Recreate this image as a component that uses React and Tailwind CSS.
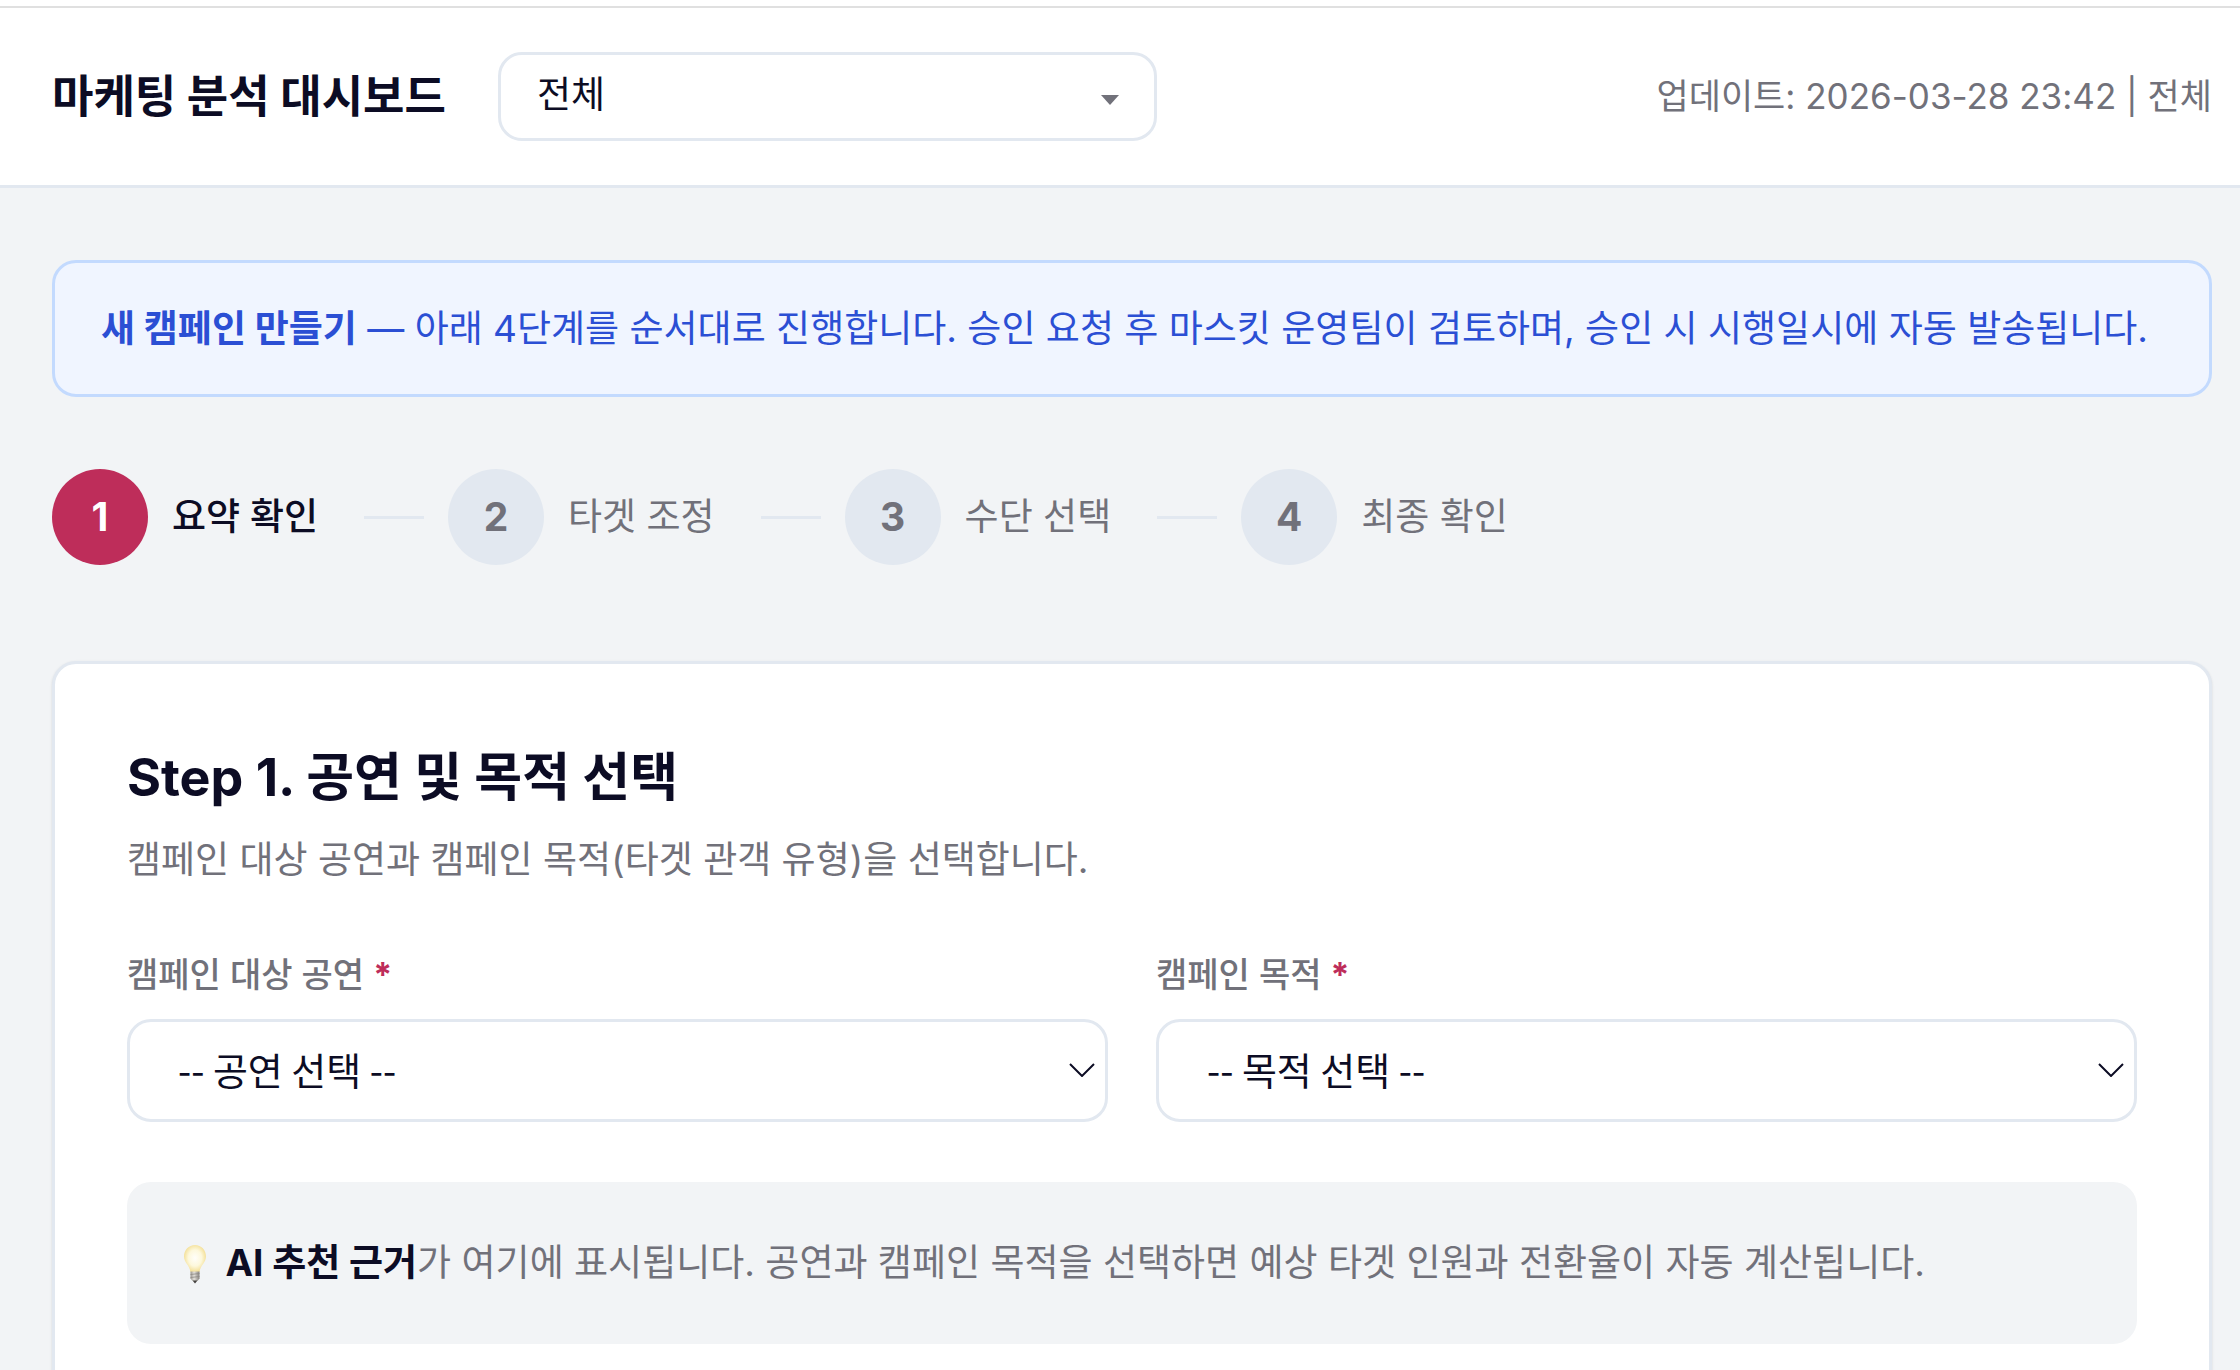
import { useState } from 'react';

const steps = ['요약 확인', '타겟 조정', '수단 선택', '최종 확인'];

function BulbIcon() {
  return (
    <svg viewBox="0 0 24 40" className="inline-block w-6 h-10 mx-2 align-[-8px]" aria-hidden="true">
      <defs>
        <radialGradient id="glass" cx="50%" cy="48%" r="60%">
          <stop offset="0" stopColor="#fffefa" />
          <stop offset="0.5" stopColor="#fdf8dc" />
          <stop offset="1" stopColor="#f0d67c" />
        </radialGradient>
        <linearGradient id="base" x1="0" x2="1">
          <stop offset="0" stopColor="#99958f" />
          <stop offset="0.4" stopColor="#e3e0da" />
          <stop offset="1" stopColor="#85817c" />
        </linearGradient>
      </defs>
      <path d="M12 1C5.800 1 1 6 1 12.500c0 6 5.500 8.500 6.500 15.500h9c1-7 6.500-9.500 6.500-15.500C23 6 18.200 1 12 1z" fill="url(#glass)" />
      <path d="M7.500 27.500h9v7l-2 2.500h-5l-2-2.500z" fill="url(#base)" />
      <path d="M7.500 30.500l9-1M7.500 33.500l9-1" stroke="#8d8984" strokeWidth="0.800" />
      <path d="M9.500 36.500h5L12 39.500z" fill="#45423f" />
    </svg>
  );
}

function SelectField({ id, label, placeholder, options }) {
  const [value, setValue] = useState('');

  return (
    <div className="flex flex-col gap-5">
      <label htmlFor={id} className="text-[34px] leading-[48px] font-medium text-[#71717a]">
        {label} <span className="text-[#be2d5a] font-bold">*</span>
      </label>
      <div className="relative">
        <select
          id={id}
          value={value}
          onChange={(e) => setValue(e.target.value)}
          className="block appearance-none w-full h-[103px] pl-12 pr-20 pb-1 rounded-3xl border-3 border-[#e2e8f0] bg-white font-['Noto_Sans_CJK_KR',sans-serif] text-[38px] text-[#0c0c24]"
        >
          <option value="">{placeholder}</option>
          {options.map((o) => <option key={o} value={o}>{o}</option>)}
        </select>
        <svg viewBox="0 0 26 14" className="absolute right-[13px] top-11 w-[26px] h-[14px] pointer-events-none" fill="none" stroke="#0c0c24" strokeWidth="2">
          <path d="M1 1l12 12L25 1" />
        </svg>
      </div>
    </div>
  );
}

export default function App() {
  const [scope, setScope] = useState('전체');
  const [current, setCurrent] = useState(0);

  return (
    <div className="min-h-screen bg-[#f2f4f6] font-['Inter','Noto_Sans_CJK_KR',sans-serif] text-[37px] text-[#0c0c24]">
      <div className="h-[6px] bg-white" />
      <header className="flex items-center justify-between h-[182px] pl-[52px] pr-7 bg-white border-t-2 border-t-[#e0e0e0] border-b-3 border-b-[#e2e8f0]">
        <div className="flex items-center gap-[52px]">
          <h1 className="text-[45px] font-bold whitespace-nowrap">마케팅 분석 대시보드</h1>
          <div className="relative">
            <select
              aria-label="공연 범위"
              value={scope}
              onChange={(e) => setScope(e.target.value)}
              className="block appearance-none w-[659px] h-[89px] pl-9 pr-20 pb-1 rounded-3xl border-3 border-[#e2e8f0] bg-white"
            >
              <option>전체</option>
            </select>
            <svg viewBox="0 0 18 10" className="absolute right-[38px] top-[43px] w-[18px] h-[10px] pointer-events-none" fill="#71717a">
              <path d="M0 0h18L9 10z" />
            </svg>
          </div>
        </div>
        <p className="text-[35px] text-[#71717a] whitespace-nowrap">업데이트: 2026-03-28 23:42 | 전체</p>
      </header>

      <main className="pt-[72px] pl-[52px] pr-7 pb-12">
        <div className="flex items-center min-h-[137px] px-[46px] rounded-3xl border-3 border-[#c3dafe] bg-[#f0f5ff] text-[#2b4fd4]">
          <p><strong className="font-bold">새 캠페인 만들기</strong> — 아래 4단계를 순서대로 진행합니다. 승인 요청 후 마스킷 운영팀이 검토하며, 승인 시 시행일시에 자동 발송됩니다.</p>
        </div>

        <ol className="flex items-center gap-[46px] mt-[72px]">
          {steps.map((name, i) => (
            <li key={name} className="flex items-center gap-6">
              {i > 0 && <span className="w-[60px] h-[3px] bg-[#e2e8f0]" />}
              <button onClick={() => setCurrent(i)} className="flex items-center gap-6 whitespace-nowrap">
                <span className={`flex items-center justify-center size-24 rounded-full text-[39px] font-bold ${i === current ? 'bg-[#be2d5a] text-white' : 'bg-[#e2e8f0] text-[#71717a]'}`}>
                  {i + 1}
                </span>
                <span className={i === current ? 'font-medium' : 'text-[#71717a]'}>{name}</span>
              </button>
            </li>
          ))}
        </ol>

        <section className="mt-24 p-[72px] rounded-3xl border-3 border-[#e2e8f0] bg-white shadow-sm">
          <h2 className="text-[52px] leading-[84px] font-bold">Step 1. 공연 및 목적 선택</h2>
          <p className="mt-1 leading-[72px] text-[#71717a]">캠페인 대상 공연과 캠페인 목적(타겟 관객 유형)을 선택합니다.</p>
          <div className="grid grid-cols-2 gap-12 mt-[55px]">
            <SelectField id="show" label="캠페인 대상 공연" placeholder="-- 공연 선택 --" options={[]} />
            <SelectField id="goal" label="캠페인 목적" placeholder="-- 목적 선택 --" options={[]} />
          </div>
          <div className="flex items-center min-h-[162px] mt-[60px] px-12 rounded-3xl bg-[#f2f4f6] text-[#71717a]">
            <p><BulbIcon /> <strong className="font-bold text-[#0c0c24]">AI 추천 근거</strong>가 여기에 표시됩니다. 공연과 캠페인 목적을 선택하면 예상 타겟 인원과 전환율이 자동 계산됩니다.</p>
          </div>
        </section>
      </main>
    </div>
  );
}
